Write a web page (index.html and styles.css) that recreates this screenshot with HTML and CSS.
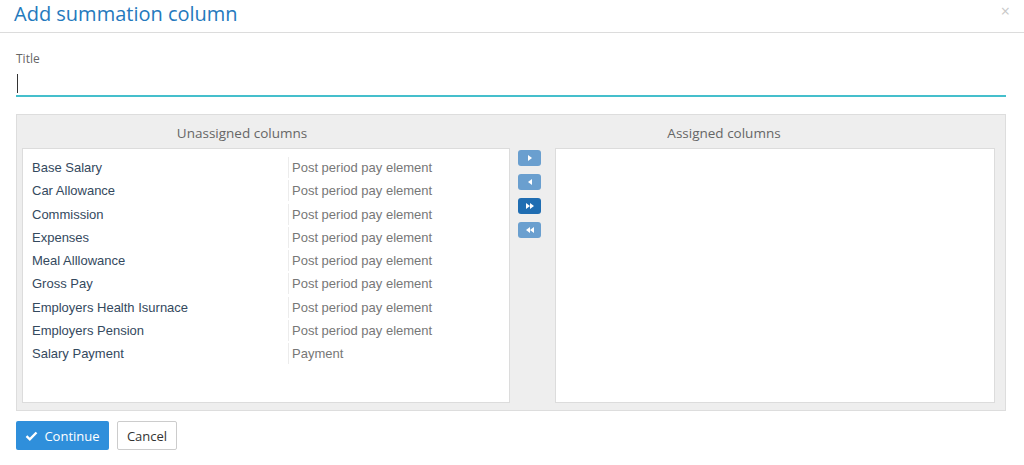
FILE: index.html
```html
<!DOCTYPE html>
<html lang="en">
<head>
    <meta charset="UTF-8">
    <title>Add summation column</title>
    <link rel="stylesheet" href="styles.css">
</head>
<body>
    <div class="modal-header">
        <h1>Add summation column</h1>
        <span class="close">&times;</span>
    </div>

    <div class="modal-body">
        <div class="form-group">
            <label for="title">Title</label>
            <div class="input-wrap">
                <input type="text" id="title" autofocus>
                <span class="caret"></span>
            </div>
        </div>

        <div class="picker">
            <div class="picker-heads">
                <div class="picker-head">Unassigned columns</div>
                <div class="picker-head">Assigned columns</div>
            </div>
            <div class="picker-body">
                <div class="list list-left">
                    <div class="row"><span class="name">Base Salary</span><span class="type">Post period pay element</span></div>
                    <div class="row"><span class="name">Car Allowance</span><span class="type">Post period pay element</span></div>
                    <div class="row"><span class="name">Commission</span><span class="type">Post period pay element</span></div>
                    <div class="row"><span class="name">Expenses</span><span class="type">Post period pay element</span></div>
                    <div class="row"><span class="name">Meal Alllowance</span><span class="type">Post period pay element</span></div>
                    <div class="row"><span class="name">Gross Pay</span><span class="type">Post period pay element</span></div>
                    <div class="row"><span class="name">Employers Health Isurnace</span><span class="type">Post period pay element</span></div>
                    <div class="row"><span class="name">Employers Pension</span><span class="type">Post period pay element</span></div>
                    <div class="row"><span class="name">Salary Payment</span><span class="type">Payment</span></div>
                </div>

                <div class="moves">
                    <button class="move">
                        <svg width="8" height="8" viewBox="0 0 8 8"><path d="M2 1 L6 4 L2 7 Z" fill="#fff"/></svg>
                    </button>
                    <button class="move">
                        <svg width="8" height="8" viewBox="0 0 8 8"><path d="M6 1 L2 4 L6 7 Z" fill="#fff"/></svg>
                    </button>
                    <button class="move active">
                        <svg width="10" height="8" viewBox="0 0 10 8"><path d="M1 1 L5 4 L1 7 Z M5 1 L9 4 L5 7 Z" fill="#fff"/></svg>
                    </button>
                    <button class="move">
                        <svg width="10" height="8" viewBox="0 0 10 8"><path d="M9 1 L5 4 L9 7 Z M5 1 L1 4 L5 7 Z" fill="#fff"/></svg>
                    </button>
                </div>

                <div class="list list-right"></div>
            </div>
        </div>

        <div class="actions">
            <button class="btn btn-primary">
                <svg width="13" height="10" viewBox="0 0 13 10"><path d="M1.5 5.2 L4.8 8.3 L11.5 1.5" fill="none" stroke="#fff" stroke-width="2.4"/></svg>
                Continue
            </button>
            <button class="btn btn-default">Cancel</button>
        </div>
    </div>
</body>
</html>
```

FILE: styles.css
```css
body {
    margin: 0;
    font-family: "Open Sans", Arial, sans-serif;
    color: #333;
    background-color: #fff;
}
.modal-header {
    display: flex;
    justify-content: space-between;
    align-items: center;
    height: 32px;
    padding: 0 14px 0 14px;
    border-bottom: 1px solid #dcdcdc;
}
h1 {
    margin: 0;
    font-size: 20px;
    font-weight: normal;
    color: #2479bd;
    line-height: 28px;
    margin-top: -4px;
}
.close {
    color: #c8c8c8;
    font-size: 16px;
    margin-top: -10px;
}
.modal-body {
    padding: 0 18px 0 16px;
}
.form-group {
    padding-top: 17px;
}
label {
    display: block;
    font-size: 12px;
    color: #666;
    line-height: 18px;
}
.input-wrap {
    position: relative;
}
input[type="text"] {
    display: block;
    width: 100%;
    height: 27px;
    margin-top: 2px;
    padding: 0 1px;
    border: none;
    border-bottom: 2px solid #45bfcc;
    box-sizing: border-box;
    font-family: "Open Sans", Arial, sans-serif;
    font-size: 14px;
    outline: none;
}
/* blinking cursor as seen in the focused field */
.caret {
    position: absolute;
    left: 1px;
    top: 4px;
    width: 1px;
    height: 19px;
    background-color: #333;
}
.picker {
    margin-top: 17px;
    height: 297px;
    box-sizing: border-box;
    padding: 0 10px 0 5px;
    background-color: #eeeeee;
    border: 1px solid #dddddd;
}
.picker-heads {
    display: flex;
    gap: 42px;
    height: 33px;
    padding-top: 3px;
    box-sizing: border-box;
    align-items: center;
}
.picker-head {
    width: 440px;
    text-align: center;
    font-size: 13.5px;
    color: #666;
}
.picker-body {
    display: flex;
    align-items: flex-start;
}
.list {
    height: 255px;
    box-sizing: border-box;
    background-color: #fff;
    border: 1px solid #dcdcdc;
}
.list-left {
    width: 488px;
    padding: 7px 9px 0 9px;
}
.list-right {
    width: 440px;
}
.row {
    display: flex;
    height: 23.25px;
    align-items: center;
    font-family: "Liberation Sans", Arial, sans-serif;
    font-size: 13px;
}
.name {
    width: 256px;
    color: #34495e;
}
.type {
    color: #777;
    border-left: 1px solid #ececec;
    padding-left: 3px;
    height: 21px;
    line-height: 21px;
}
.moves {
    display: flex;
    flex-direction: column;
    gap: 8px;
    width: 23px;
    margin: 2px 14px 0 8px;
}
.move {
    width: 23px;
    height: 16px;
    padding: 0;
    border: none;
    border-radius: 3px;
    background-color: #6a9fcf;
    display: flex;
    align-items: center;
    justify-content: center;
    cursor: pointer;
}
.move.active {
    background-color: #1f6db2;
}
.actions {
    display: flex;
    gap: 8px;
    margin-top: 10px;
}
.btn {
    height: 29px;
    border-radius: 2px;
    font-family: "Open Sans", Arial, sans-serif;
    font-size: 13px;
    cursor: pointer;
    display: flex;
    align-items: center;
    justify-content: center;
}
.btn-primary {
    width: 93px;
    gap: 6px;
    background-color: #2f8fdb;
    color: #fff;
    border: none;
}
.btn-default {
    width: 60px;
    background-color: #fff;
    color: #333;
    border: 1px solid #cccccc;
}
```
